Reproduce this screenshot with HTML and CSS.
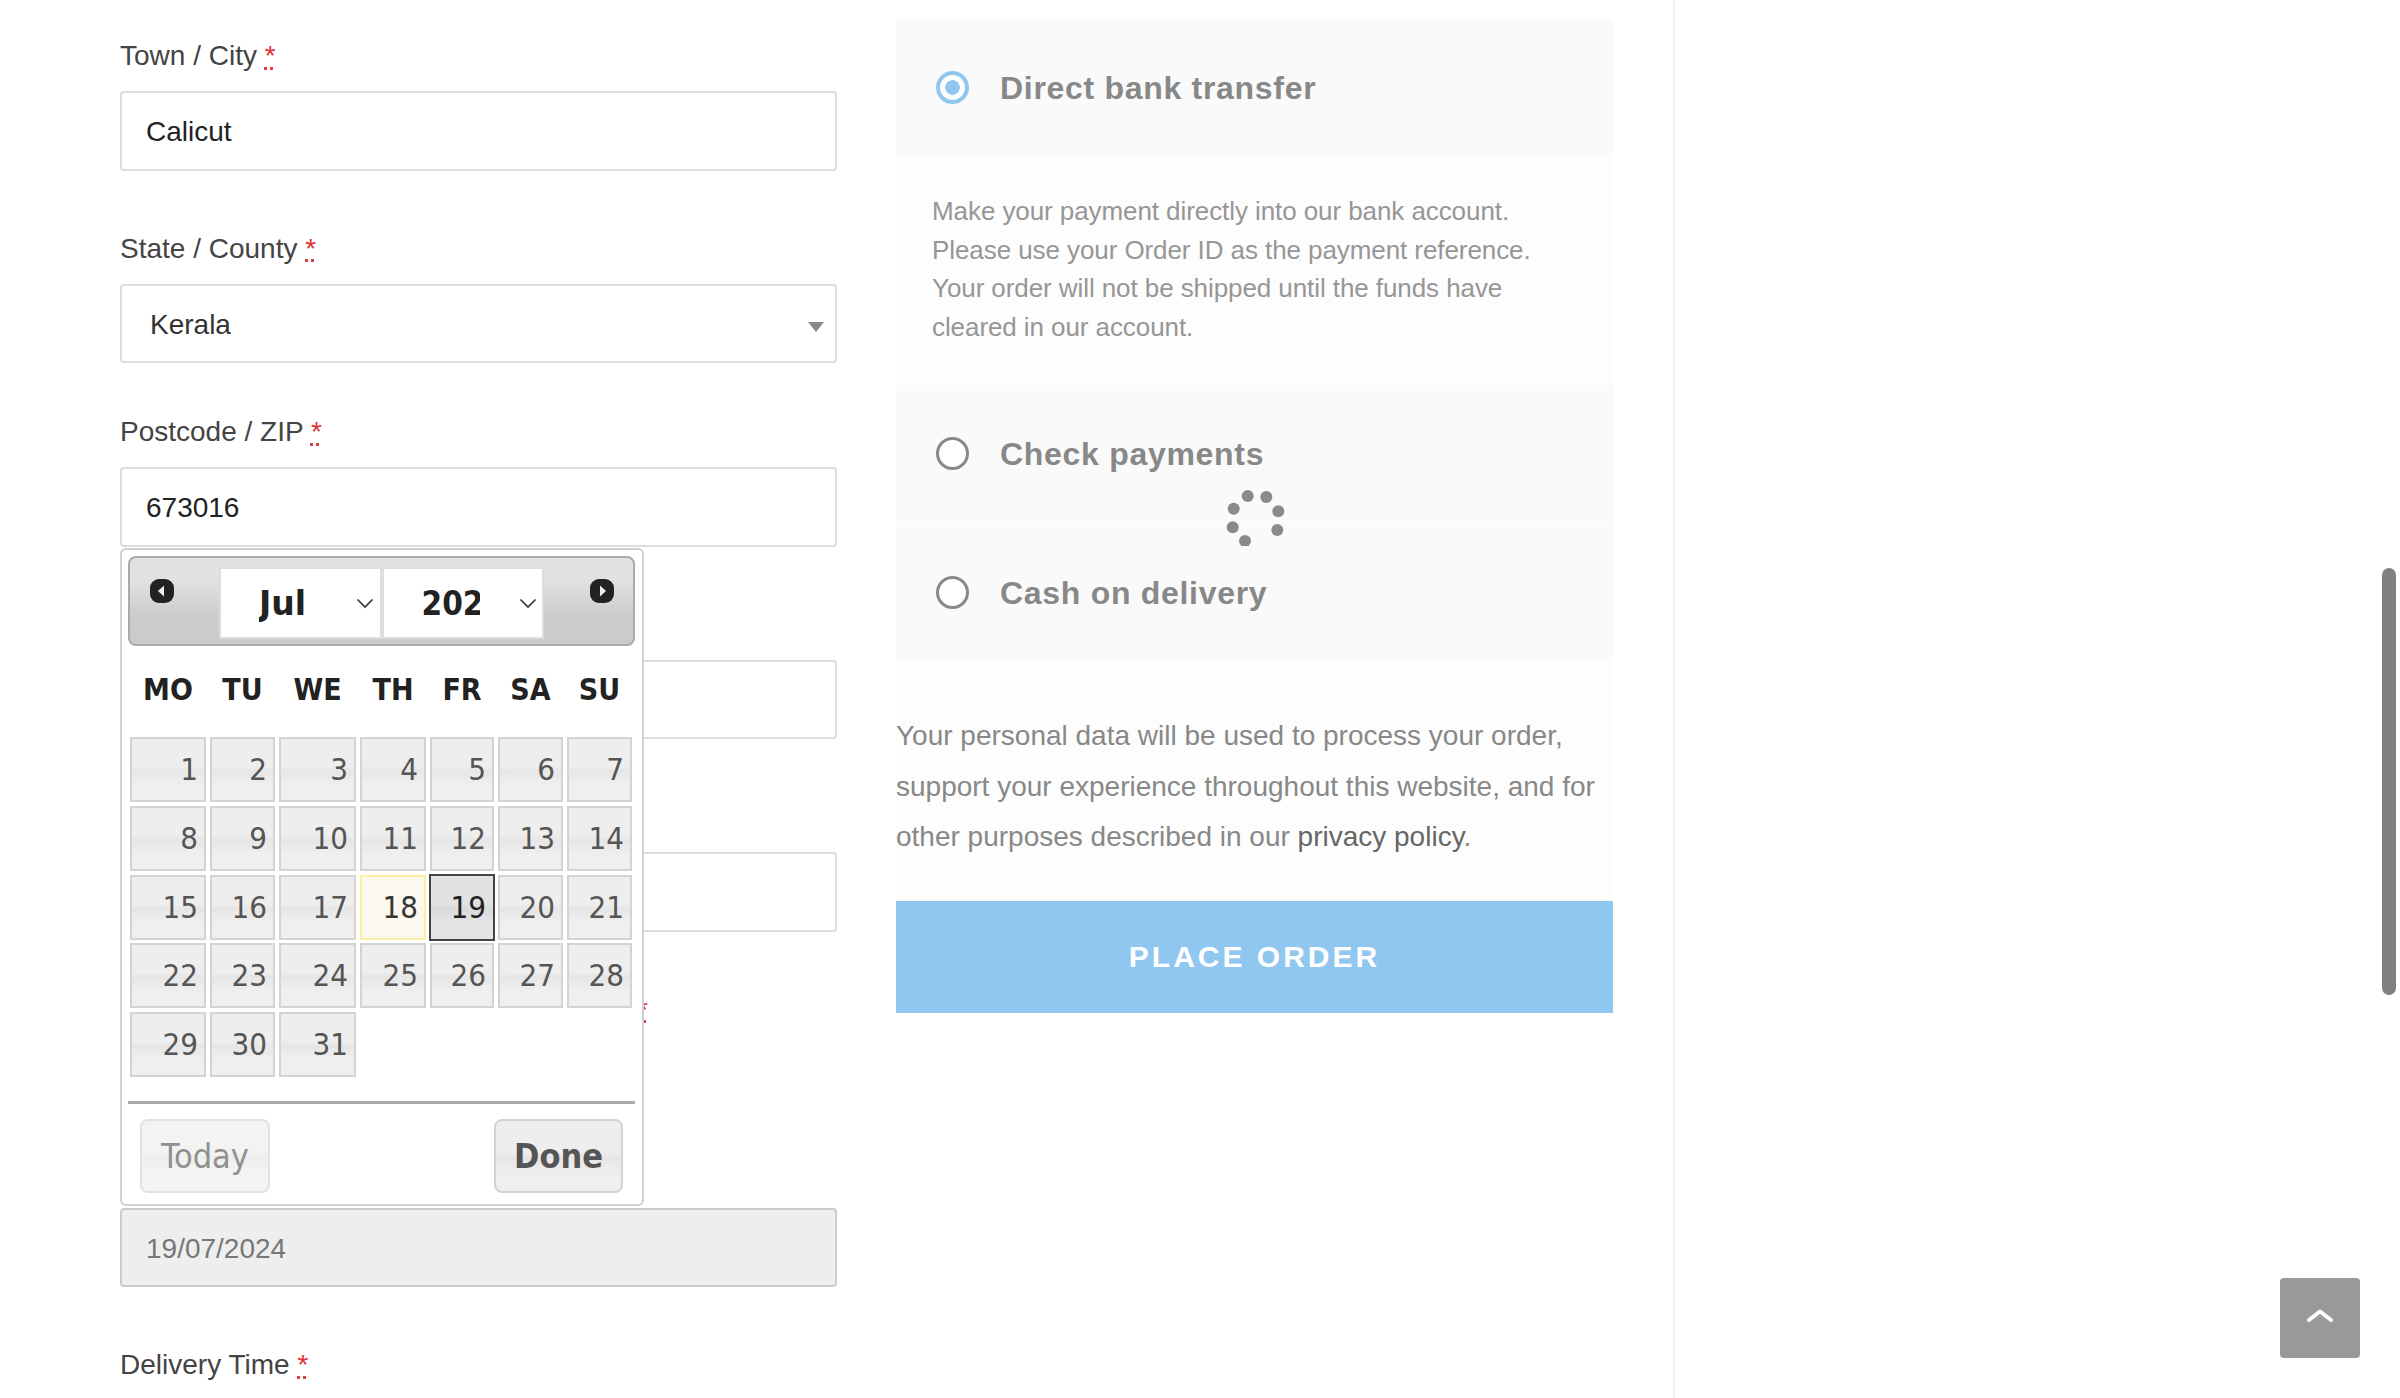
FILE: index.html
```html
<!DOCTYPE html>
<html>
<head>
<meta charset="utf-8">
<title>Checkout</title>
<link rel="stylesheet" href="styles.css">
</head>
<body>

<div class="page">

  <div class="billing">
    <div class="field">
      <label class="lbl">Town / City <abbr class="req">*</abbr></label>
      <div class="input">Calicut</div>
    </div>
    <div class="field field-select">
      <label class="lbl">State / County <abbr class="req">*</abbr></label>
      <div class="input select">Kerala</div>
    </div>
    <div class="field">
      <label class="lbl">Postcode / ZIP <abbr class="req">*</abbr></label>
      <div class="input">673016</div>
    </div>
    <div class="field">
      <label class="lbl">&nbsp;</label>
      <div class="input"></div>
    </div>
    <div class="field">
      <label class="lbl">&nbsp;</label>
      <div class="input"></div>
    </div>
    <div class="field">
      <label class="lbl lbl-tall"><abbr class="req">*</abbr></label>
      <div class="input input-readonly">19/07/2024</div>
    </div>
    <div class="field">
      <label class="lbl">Delivery Time <abbr class="req">*</abbr></label>
    </div>

    <!-- date picker popup -->
    <div class="datepicker">
      <div class="dp-header">
        <span class="dp-nav">
          <svg width="24" height="24" viewBox="0 0 24 24"><rect x="0" y="0" width="24" height="24" rx="9" fill="#222"/><path d="M14 6.5v11L8 12z" fill="#eee"/></svg>
        </span>
        <div class="dp-select dp-month"><span class="dp-value">Jul</span><svg class="dp-chevron" width="18" height="11" viewBox="0 0 18 11"><path d="M1.5 1.5L9 9l7.500-7.500" fill="none" stroke="#333" stroke-width="1.600"/></svg></div>
        <div class="dp-select dp-year"><span class="dp-value">2024</span><svg class="dp-chevron" width="18" height="11" viewBox="0 0 18 11"><path d="M1.5 1.5L9 9l7.500-7.500" fill="none" stroke="#333" stroke-width="1.600"/></svg></div>
        <span class="dp-nav dp-nav-next">
          <svg width="24" height="24" viewBox="0 0 24 24"><rect x="0" y="0" width="24" height="24" rx="9" fill="#222"/><path d="M10 6.500v11l6-5.500z" fill="#eee"/></svg>
        </span>
      </div>

      <div class="dp-grid dp-days">
        <div>MO</div><div>TU</div><div>WE</div><div>TH</div><div>FR</div><div>SA</div><div>SU</div>
      </div>

      <div class="dp-grid dp-dates">
        <a>1</a><a>2</a><a>3</a><a>4</a><a>5</a><a>6</a><a>7</a>
        <a>8</a><a>9</a><a>10</a><a>11</a><a>12</a><a>13</a><a>14</a>
        <a>15</a><a>16</a><a>17</a><a class="today">18</a><a class="active">19</a><a>20</a><a>21</a>
        <a>22</a><a>23</a><a>24</a><a>25</a><a>26</a><a>27</a><a>28</a>
        <a>29</a><a>30</a><a>31</a>
      </div>

      <div class="dp-footer">
        <button class="dp-btn dp-today">Today</button>
        <button class="dp-btn dp-done">Done</button>
      </div>
    </div>
  </div>

  <div class="review">
    <div class="pay-head">
      <span class="radio radio-on"></span>
      <span class="pay-name">Direct bank transfer</span>
    </div>
    <div class="pay-desc">
      Make your payment directly into our bank account.<br>
      Please use your Order ID as the payment reference.<br>
      Your order will not be shipped until the funds have<br>
      cleared in our account.
    </div>
    <div class="pay-head">
      <span class="radio"></span>
      <span class="pay-name">Check payments</span>
    </div>
    <div class="pay-head pay-last">
      <span class="radio"></span>
      <span class="pay-name">Cash on delivery</span>
    </div>

    <p class="privacy">Your personal data will be used to process your order, support your experience throughout this website, and for other purposes described in our <a href="#">privacy policy</a>.</p>

    <button class="place-order">PLACE ORDER</button>

    <svg class="spinner" width="60" height="60" viewBox="0 0 60 60" fill="#8a8a8a">
      <circle cx="21.700" cy="10" r="6"/>
      <circle cx="40.300" cy="11" r="6"/>
      <circle cx="52.300" cy="25.300" r="6"/>
      <circle cx="51.300" cy="44" r="6"/>
      <circle cx="19" cy="55" r="6"/>
      <circle cx="6.700" cy="41.300" r="6"/>
      <circle cx="7.700" cy="22.700" r="6"/>
    </svg>
  </div>

</div>

<div class="scroll-thumb"></div>

<a class="to-top" href="#">
  <svg width="28" height="18" viewBox="0 0 28 18"><path d="M3 14L14 5.500 25 14" fill="none" stroke="#fff" stroke-width="4" stroke-linecap="round" stroke-linejoin="round"/></svg>
</a>

</body>
</html>
```

FILE: styles.css
```css
html, body {
  margin: 0;
  height: 1398px;
  overflow: hidden;
  background: #fff;
}
body {
  font-family: "Liberation Sans", Arial, sans-serif;
  font-size: 28px;
  color: #444;
}

.page {
  display: flex;
  width: 1675px;
  height: 1398px;
  box-sizing: border-box;
  padding-left: 120px;
  border-right: 2px solid #f2f2f2;
}

/* left column */
.billing {
  position: relative;
  width: 717px;
  padding-top: 35px;
}
.field {
  margin-bottom: 57px;
}
.field-select {
  margin-bottom: 48px;
}
.lbl {
  display: block;
  height: 40px;
  line-height: 42px;
  margin-bottom: 16px;
}
.lbl-tall {
  height: 203px;
  padding-left: 517px;
  box-sizing: border-box;
}
.req {
  color: #dd3333;
  text-decoration: underline dotted;
}
.input {
  box-sizing: border-box;
  height: 79.500px;
  line-height: 78px;
  padding: 0 24px;
  border: 2px solid #ddd;
  border-radius: 4px;
  color: #222;
  background: #fff;
}
.select {
  position: relative;
  padding-left: 28px;
  color: #333;
}
.select::after {
  content: "";
  position: absolute;
  right: 11px;
  top: 36px;
  border-left: 8px solid transparent;
  border-right: 8px solid transparent;
  border-top: 10px solid #888;
}
.input-readonly {
  background: #eee;
  border-color: #ccc;
  color: #777;
}

/* date picker */
.datepicker {
  position: absolute;
  left: 0;
  top: 548px;
  box-sizing: border-box;
  width: 524px;
  height: 658px;
  padding: 6px 6px;
  background: #fff;
  border: 2px solid #d0d0d0;
  border-radius: 6px;
  font-family: "DejaVu Sans Condensed", "DejaVu Sans", sans-serif;
  font-stretch: condensed;
  font-size: 31px;
}
.dp-header {
  display: flex;
  justify-content: center;
  box-sizing: border-box;
  width: 507px;
  height: 90px;
  padding: 9px 20px;
  border: 2px solid #aaa;
  border-radius: 8px;
  background: linear-gradient(#e2e2e2 25%, #cbcbcb 70%);
}
.dp-nav {
  margin-top: 7px;
  height: 24px;
}
.dp-nav-next {
  margin-left: 1px;
  margin-right: -1px;
}
.dp-select {
  display: flex;
  align-items: center;
  box-sizing: border-box;
  width: 163px;
  height: 72px;
  padding-left: 38px;
  border: 2px solid #ddd;
  background: #fff;
  font-family: "DejaVu Sans", sans-serif;
  font-stretch: normal;
  font-size: 33px;
  font-weight: bold;
  color: #222;
}
.dp-month {
  margin-left: 45px;
}
.dp-year {
  margin-right: 45px;
  font-family: "DejaVu Sans Condensed", "DejaVu Sans", sans-serif;
  font-stretch: condensed;
}
.dp-value {
  display: block;
  width: 58px;
  overflow: hidden;
  white-space: nowrap;
}
.dp-chevron {
  flex: none;
  margin-left: 39px;
}
.dp-grid {
  display: grid;
  grid-template-columns: 76px 65px 77px 66px 64px 65px 65px;
  column-gap: 4px;
  margin-left: 2px;
}
.dp-days {
  margin-top: 22px;
  margin-bottom: 25px;
  height: 44px;
  line-height: 44px;
  text-align: center;
  font-size: 30px;
  font-weight: bold;
  color: #222;
}
.dp-dates {
  grid-auto-rows: 65px;
  row-gap: 3.750px;
}
.dp-dates a {
  box-sizing: border-box;
  padding-right: 6px;
  line-height: 61px;
  text-align: right;
  color: #555;
  border: 2px solid #d3d3d3;
  background: linear-gradient(#eee 45%, #e6e6e6 52%, #efefef 75%);
}
.dp-dates a.today {
  border-color: #fcefa1;
  background: #fbf9ee;
  color: #363636;
}
.dp-dates a.active {
  margin: -1px;
  line-height: 63px;
  padding-right: 7px;
  border-color: #444;
  background: linear-gradient(#e2e2e2 45%, #dadada 52%, #e4e4e4 75%);
  color: #212121;
}
.dp-footer {
  display: flex;
  justify-content: space-between;
  width: 507px;
  box-sizing: border-box;
  margin-top: 24px;
  padding: 15px 12px 0;
  border-top: 3px solid #aaa;
}
.dp-btn {
  box-sizing: border-box;
  width: 129px;
  height: 74px;
  padding: 0;
  font-family: inherit;
  font-stretch: condensed;
  font-size: 34px;
  color: #555;
  border: 2px solid #d3d3d3;
  border-radius: 8px;
  background: linear-gradient(#eee 45%, #e6e6e6 52%, #efefef 75%);
}
.dp-today {
  width: 130px;
  opacity: .65;
}
.dp-done {
  font-weight: bold;
}

/* right column */
.review {
  position: relative;
  width: 717px;
  height: 995px;
  margin: 19px 0 0 59px;
  background: #fdfdfd;
  color: #888;
}
.pay-head {
  display: flex;
  align-items: center;
  box-sizing: border-box;
  height: 137px;
  padding-left: 40px;
  background: #fafafa;
}
.pay-last {
  height: 138px;
  margin-top: 1px;
  padding-top: 1px;
}
.radio {
  box-sizing: border-box;
  width: 33px;
  height: 33px;
  margin-right: 31px;
  border: 3px solid #888;
  border-radius: 50%;
  background: #fff;
}
.radio-on {
  border: 4px solid #8fc7f0;
  background: radial-gradient(circle, #8fc7f0 7px, #fff 7.500px);
}
.pay-name {
  padding-top: 2px;
  font-size: 32px;
  font-weight: bold;
  letter-spacing: .7px;
}
.pay-desc {
  box-sizing: border-box;
  height: 229px;
  padding: 36px 36px 0;
  font-size: 26px;
  letter-spacing: -.08px;
  line-height: 38.500px;
  color: #969696;
}
.privacy {
  margin: 50px 0 0;
  font-size: 28px;
  line-height: 50.500px;
}
.privacy a {
  color: #666;
  text-decoration: none;
}
.place-order {
  display: block;
  width: 100%;
  height: 112px;
  margin-top: 38px;
  border: 0;
  padding: 0;
  background: #8fc7f0;
  color: #fff;
  font-family: inherit;
  font-size: 30px;
  font-weight: bold;
  letter-spacing: 3px;
}
.spinner {
  position: absolute;
  left: 330px;
  top: 467px;
}

/* fixed things */
.scroll-thumb {
  position: fixed;
  left: 2382px;
  top: 568px;
  width: 14px;
  height: 427px;
  border-radius: 7px;
  background: #808080;
}
.to-top {
  position: fixed;
  left: 2280px;
  top: 1278px;
  display: flex;
  align-items: center;
  justify-content: center;
  width: 80px;
  height: 80px;
  padding-bottom: 6px;
  box-sizing: border-box;
  border-radius: 4px;
  background: #999;
}
```
